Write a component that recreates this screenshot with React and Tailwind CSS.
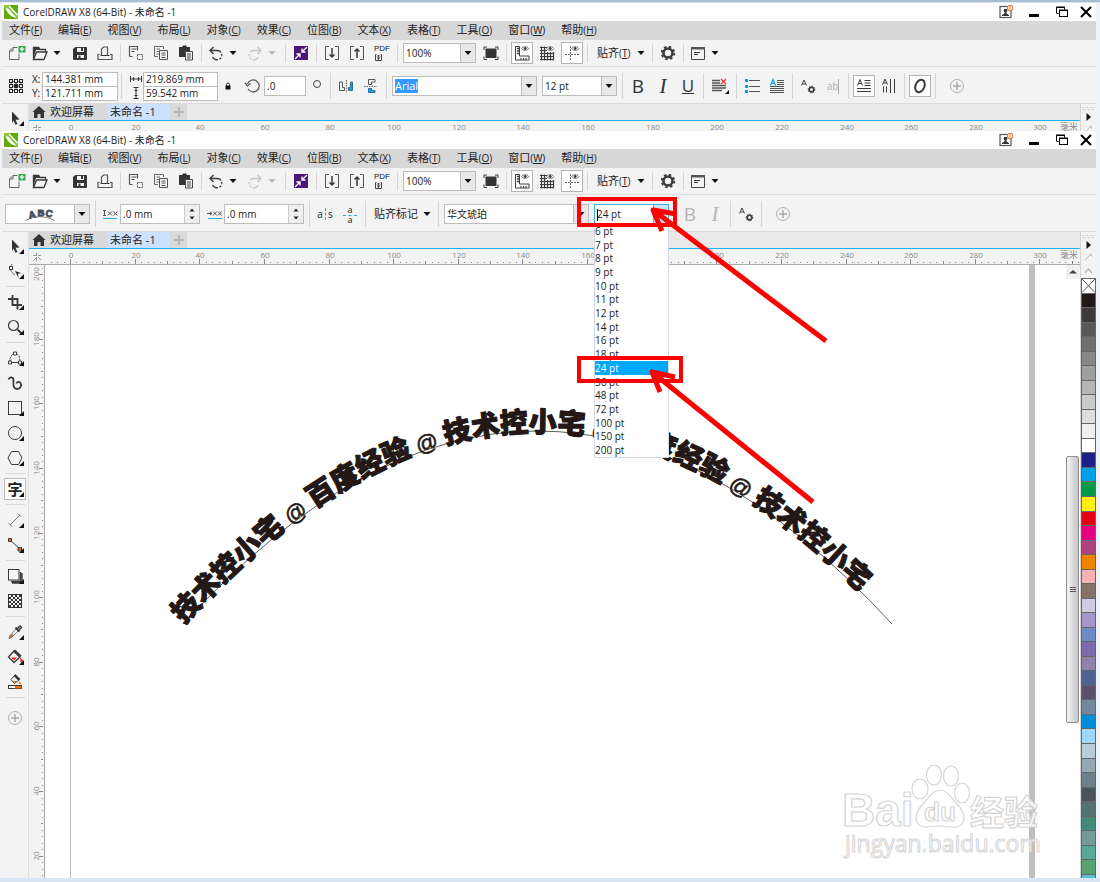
import { useState } from "react";

const MENUS = [
  ["文件", "F"],
  ["编辑", "E"],
  ["视图", "V"],
  ["布局", "L"],
  ["对象", "C"],
  ["效果", "C"],
  ["位图", "B"],
  ["文本", "X"],
  ["表格", "T"],
  ["工具", "O"],
  ["窗口", "W"],
  ["帮助", "H"],
];

const SIZES = [6, 7, 8, 9, 10, 11, 12, 14, 16, 18, 24, 36, 48, 72, 100, 150, 200];

const SWATCHES = [
  "#231815", "#3e3a39", "#595757", "#6f6f6f", "#888888", "#9fa0a0", "#b5b5b6",
  "#c9caca", "#dcdddd", "#efefef", "#ffffff", "#1d2088", "#00a0e9", "#009944",
  "#fff100", "#e60012", "#e4007f", "#b04183", "#f08300", "#f4b2b2", "#85736a",
  "#d0cbe5", "#a598c8", "#6e8bc6", "#7b6aac", "#8f82ac", "#4e6391", "#5a506e",
  "#7187a0", "#008cd6", "#a0d8f6", "#b8cdda", "#95a7b1", "#70808a", "#4a535c",
  "#527370", "#448a78", "#739a98", "#57a896", "#59a370",
];

const RULER_STEP = 64.63;

export default function App() {
  return (
    <div className="flex min-h-screen flex-col overflow-hidden bg-[#eef2fa] font-['Open_Sans','Noto_Sans_CJK_SC',sans-serif] text-[10px] text-[#222]">
      <div className="h-[3px] border-b border-[#dbe7f3] bg-[#a9bdd1]" />
      <div className="relative flex flex-1 flex-col pr-1 pl-0.5">
        <div className="h-32 overflow-hidden">
          <AppWindow propertyBar={<ObjectProperties />} />
        </div>
        <AppWindow propertyBar={<PathTextProperties />}>
          <Drawing />
        </AppWindow>
        <Annotations />
      </div>
      <div className="h-1 bg-[#d8e4f2]" />
    </div>
  );
}

function AppWindow({ propertyBar, children }) {
  return (
    <section className="flex flex-1 flex-col bg-[#f3f3f3]">
      <TitleBar />
      <MenuBar />
      <StandardToolbar />
      <div className="flex h-[37px] items-center gap-px border-b border-[#d9d9d9] pt-0.5 pl-0.5">
        {propertyBar}
      </div>
      <div className="flex flex-1">
        <Toolbox />
        <div className="flex min-w-0 flex-1 flex-col">
          <DocumentTabs />
          <HorizontalRuler />
          <div className="flex flex-1">
            <VerticalRuler />
            {children}
          </div>
        </div>
        <Palette />
      </div>
    </section>
  );
}

function TitleBar() {
  return (
    <header className="flex h-[18px] items-center bg-white pl-0.5">
      <svg viewBox="0 0 14 14" className="size-3.5">
        <rect width="14" height="14" fill="#65a80d" />
        <path d="M0 0h4l10 10v4h-1L0 3z" fill="#8cc63f" />
        <path d="M1.500 3.500C4 10 9 12.500 12.500 13L4 3.500z" fill="#fff" />
        <path d="M5 1l8.500 9" stroke="#fff" strokeWidth="1.300" />
      </svg>
      <h1 className="pl-[5px] text-[10px] whitespace-nowrap">CorelDRAW X8 (64-Bit) - 未命名 -1</h1>
      <div className="ml-auto flex items-center">
        <button aria-label="用户" className="flex w-7 justify-center">
          <svg viewBox="0 0 14 14" className="size-3.5" fill="none">
            <rect x="1" y="1.500" width="11" height="11" stroke="#555" strokeWidth="1.200" />
            <circle cx="6.500" cy="5.500" r="1.800" fill="#333" />
            <path d="M5.500 6h2v2.500L10 10v1H3v-1l2.500-1.500z" fill="#333" />
            <circle cx="11" cy="3" r="2.600" fill="#fff" stroke="#f08040" strokeWidth="1.200" />
            <path d="M11 1.500v3" stroke="#f08040" />
          </svg>
        </button>
        <button aria-label="最小化" className="flex w-7 justify-center">
          <svg viewBox="0 0 14 14" className="size-3.5">
            <path d="M2 9h10v3H2z" fill="#000" />
          </svg>
        </button>
        <button aria-label="还原" className="flex w-7 justify-center">
          <svg viewBox="0 0 14 14" className="size-3.5" fill="none" stroke="#000">
            <path d="M3.500 8.500h-2v-6h8v2M1 2h9" />
            <rect x="4.500" y="5.500" width="8" height="6" />
            <path d="M4 5h9" />
          </svg>
        </button>
        <button aria-label="关闭" className="flex w-5 justify-center">
          <svg viewBox="0 0 14 14" className="size-3.5" stroke="#000" strokeWidth="2">
            <path d="M2 2l10 10M12 2L2 12" />
          </svg>
        </button>
      </div>
    </header>
  );
}

function MenuBar() {
  return (
    <nav className="flex h-[19px] items-center gap-4 bg-[#d7d7d7] pl-[7px]">
      {MENUS.map(([label, key]) => (
        <button key={label} className="text-[11px] whitespace-nowrap">
          {label}
          <span className="text-[10px]">
            (<u>{key}</u>)
          </span>
        </button>
      ))}
    </nav>
  );
}

function Sep() {
  return (
    <div className="flex w-[5px] shrink-0 justify-center self-stretch py-1">
      <div className="w-px bg-[#d4d4d4]" />
    </div>
  );
}

function Caret({ muted }) {
  return (
    <svg viewBox="0 0 10 6" className="h-1.5 w-2.5" fill={muted ? "#bbb" : "#111"}>
      <path d="M1.500 1h7L5 5z" />
    </svg>
  );
}

function Tool({ label, boxed, wide, children }) {
  return (
    <button
      aria-label={label}
      className={`flex h-5 shrink-0 items-center justify-center ${wide ? "w-[26px]" : "w-6"}`}
    >
      <span
        className={`flex size-5 items-center justify-center ${
          boxed ? "bg-white outline outline-[#b5b5b5]" : ""
        }`}
      >
        {children}
      </span>
    </button>
  );
}

function SplitTool({ label, muted, children }) {
  return (
    <button aria-label={label} className="flex w-[38px] shrink-0 items-center gap-0.5 pl-px">
      {children}
      <Caret muted={muted} />
    </button>
  );
}

function Icon({ children }) {
  return (
    <svg viewBox="0 0 20 20" className="size-5 shrink-0" fill="none" stroke="#3a3a3a">
      {children}
    </svg>
  );
}

function StandardToolbar() {
  return (
    <div className="flex h-[27px] items-center gap-px border-b border-[#dedede] pl-0.5">
      <Tool label="新建">
        <Icon>
          <path d="M11.500 4.500H7L3.500 8v8.500h9.500v-6M7 4.500V8H3.500" stroke="#666" />
          <rect x="12.500" y="3" width="7" height="6.500" fill="#2fa84f" stroke="none" />
          <path d="M16 4v4.500M13.800 6.200h4.500" stroke="#fff" strokeWidth="1.300" />
        </Icon>
      </Tool>
      <SplitTool label="打开">
        <Icon>
          <path d="M3.500 16.500v-12h5l1.500 2h5.500v2M3.500 16.500L6.500 9h10.500l-3 7.500z" strokeWidth="1.300" />
          <path d="M3 4h6l1 3H6L3.500 15z" fill="#3a3a3a" stroke="none" />
        </Icon>
      </SplitTool>
      <Tool label="保存">
        <Icon>
          <path d="M5 4.500h11.500v12h-13V6z" fill="#333" />
          <path d="M7 5h7v4H7zM7 12h7v3H7z" fill="#f3f3f3" stroke="none" />
          <path d="M11 5h2v3h-2zM8.500 12.500h2V15h-2z" fill="#333" stroke="none" />
        </Icon>
      </Tool>
      <Tool label="打印">
        <Icon>
          <path d="M6.500 12V6l2-2h4v8M4.500 11.500h-1.500v5h14v-5h-2" strokeWidth="1.200" stroke="#555" />
          <path d="M5.500 12.500h9" />
        </Icon>
      </Tool>
      <Sep />
      <Tool label="剪切">
        <Icon>
          <path d="M3.500 13.500v-10h8v4M3.500 13.500h3M5.500 6h5M5.500 8.500h3" strokeWidth="1.200" stroke="#555" />
          <path d="M11.500 11.500h5v5h-5z" strokeDasharray="2 1" stroke="#555" />
        </Icon>
      </Tool>
      <Tool label="复制">
        <Icon>
          <path d="M7 13.500H3.500v-10h9V6M5.500 6H9M5.500 8.500H8M5.500 11H8" stroke="#666" />
          <path d="M8.500 7.500h8v9h-8zM10.500 10h4M10.500 12h4M10.500 14.500h4" stroke="#555" />
        </Icon>
      </Tool>
      <Tool label="粘贴">
        <Icon>
          <path d="M3 4h3l1-1.500h3L11 4h3v4H9v6H3z" fill="#333" stroke="none" />
          <path d="M9.500 8.500h7V17h-7zM11 11h4M11 13h4M11 15h4" stroke="#444" />
        </Icon>
      </Tool>
      <Sep />
      <SplitTool label="撤消">
        <Icon>
          <path d="M4.500 7.500H11a4.600 4.600 0 0 1 .5 9.200C9.500 17 7.500 16 6.500 14" strokeWidth="1.300" strokeDasharray="11 1.500 2.500 1.500 2 1.500" />
          <path d="M7.500 4L4 7.500 7.500 11" strokeWidth="1.400" />
        </Icon>
      </SplitTool>
      <SplitTool label="重做" muted>
        <Icon>
          <g stroke="#c4c4c4">
            <path d="M15.500 7.500H9a4.600 4.600 0 0 0-.5 9.200c2 .3 4-.7 5-2.700" strokeWidth="1.300" strokeDasharray="11 1.500 2.500 1.500 2 1.500" />
            <path d="M12.500 4L16 7.500 12.500 11" strokeWidth="1.300" />
          </g>
        </Icon>
      </SplitTool>
      <Sep />
      <Tool label="搜索内容">
        <Icon>
          <rect x="3" y="3" width="14" height="14" fill="#4b1678" stroke="none" />
          <path d="M16 4l-5 5M11 5.500V9h3.500M4 16l5-5M9 14.500V11H5.500" stroke="#fff" strokeWidth="1.300" />
        </Icon>
      </Tool>
      <Sep />
      <Tool label="导入">
        <Icon>
          <path d="M7 3.500H3.500v13H7M13 3.500h3.500v13H13" stroke="#555" />
          <path d="M10 5v9M7.500 11.500L10 14l2.500-2.500" strokeWidth="1.500" />
        </Icon>
      </Tool>
      <Tool label="导出">
        <Icon>
          <path d="M7 3.500H3.500v13H7M13 3.500h3.500v13H13" stroke="#555" />
          <path d="M10 15V6M7.500 8.500L10 6l2.500 2.500" strokeWidth="1.500" />
        </Icon>
      </Tool>
      <Tool label="发布为 PDF">
        <span className="flex flex-col items-start">
          <span className="font-['Liberation_Sans',sans-serif] text-[8px] leading-[8px]">PDF</span>
          <svg viewBox="0 0 8 8" className="size-2" fill="none" stroke="#444">
            <path d="M2.500 1.500h-1v6h6v-6h-1M4.500 7V2M3 3.500L4.500 2 6 3.500M3 5h3" />
          </svg>
        </span>
      </Tool>
      <Sep />
      <Combo label="缩放级别" value="100%" className="mx-0.5 w-[73px]" />
      <Tool label="全屏预览">
        <Icon>
          <rect x="5" y="6" width="10" height="8.500" fill="#333" />
          <path d="M3 7V4h3M14 4h3v3M17 13.500v3h-3M6 16.500H3v-3" />
        </Icon>
      </Tool>
      <Sep />
      <Tool label="显示标尺" boxed>
        <Icon>
          <path d="M3.500 3.500h4v9.500h9.500v4H3.500z" />
          <path d="M5 5.500h2M5 8h2M5 10.500h2M9 15v1.500M11.500 15v1.500M14 15v1.500" strokeWidth="1.300" />
          <Eye />
        </Icon>
      </Tool>
      <Tool label="显示网格">
        <Icon>
          <path d="M3 4.500h7M3 7.500h7M3 10.500h14M3 13.500h14M3 16.500h14M4.500 3.500v14M7.500 3.500v14M10.500 9v8.500M13.500 9v8.500M16.500 9v8.500" strokeWidth="1.200" />
          <Eye />
        </Icon>
      </Tool>
      <Tool label="显示辅助线" boxed>
        <Icon>
          <path d="M8.500 3v14.500M3 11.500h15" stroke="#666" strokeDasharray="2 1" />
          <Eye />
        </Icon>
      </Tool>
      <Sep />
      <button className="flex w-[58px] shrink-0 items-center gap-1.5 pl-1.5 whitespace-nowrap">
        <span>
          <span className="text-[11px]">贴齐</span>(<u>T</u>)
        </span>
        <Caret />
      </button>
      <Sep />
      <Tool label="选项">
        <Icon>
          <circle cx="10" cy="10" r="4.500" strokeWidth="2.500" />
          <circle cx="10" cy="10" r="6.300" strokeWidth="1.800" strokeDasharray="2.500 2.450" />
        </Icon>
      </Tool>
      <Sep />
      <SplitTool label="应用程序启动器">
        <Icon>
          <path d="M3.500 4.500h13v12h-13z" stroke="#444" />
          <path d="M3 4h14v2.500H3z" fill="#555" stroke="none" />
          <path d="M6 9.500h6M6 11.500h4" />
        </Icon>
      </SplitTool>
    </div>
  );
}

function Eye() {
  return (
    <g>
      <path d="M9.500 5.500c2-2.500 5.500-2.500 7.500 0-2 2.500-5.500 2.500-7.500 0z" fill="#f3f3f3" stroke="#777" />
      <circle cx="13.200" cy="5.500" r="1" fill="#333" />
    </g>
  );
}

function Combo({ label, value, className }) {
  return (
    <div className={`relative h-5 shrink-0 border border-[#bcbcbc] bg-white ${className}`}>
      <select
        aria-label={label}
        className="h-full w-full appearance-none bg-transparent pl-0.5 text-[10px] outline-none"
      >
        <option>{value}</option>
      </select>
      <span className="pointer-events-none absolute inset-y-0 right-0 flex w-[15px] items-center justify-center border-l border-[#bcbcbc] bg-[#e8e8e8]">
        <Caret />
      </span>
    </div>
  );
}

function Field({ label, value, className }) {
  return (
    <input
      aria-label={label}
      defaultValue={value}
      className={`border border-[#bcbcbc] bg-white pl-0.5 text-[10px] outline-none ${className}`}
    />
  );
}

function AddButton() {
  return (
    <button aria-label="快速自定义" className="ml-1 flex w-7 shrink-0 justify-center">
      <PlusCircle />
    </button>
  );
}

function PlusCircle() {
  return (
    <Icon>
      <circle cx="10" cy="10" r="6.500" stroke="#b0b0b0" />
      <path d="M10 6v8M6 10h8" stroke="#aaa" strokeWidth="1.500" />
    </Icon>
  );
}

function CharSettingsIcon() {
  return (
    <Icon>
      <path d="M3.500 9.500L6 4l2.500 5.500M4.300 8h3.500" stroke="#444" />
      <circle cx="13.500" cy="13.500" r="2.300" strokeWidth="1.600" />
      <circle cx="13.500" cy="13.500" r="3.300" strokeWidth="1" strokeDasharray="1.500 1" />
    </Icon>
  );
}

function StyleButtons({ muted }) {
  const color = muted ? "text-[#b5b5b5]" : "text-[#333]";
  return (
    <>
      <button aria-label="粗体" className={`w-6 shrink-0 text-[19px] leading-5 font-medium ${color}`}>
        B
      </button>
      <button
        aria-label="斜体"
        className={`w-6 shrink-0 font-['Liberation_Serif',serif] text-[21px] leading-5 italic ${color}`}
      >
        I
      </button>
    </>
  );
}

function ObjectProperties() {
  return (
    <>
      <Tool label="对象原点">
        <Icon>
          <path d="M5 5.500h10M5 10h10M5 14.500h10M5 5v10M10 5v10M15 5v10" stroke="#777" />
          <g fill="#f3f3f3" stroke="#222">
            <rect x="3.500" y="3.500" width="3" height="3" />
            <rect x="8.500" y="3.500" width="3" height="3" />
            <rect x="13.500" y="3.500" width="3" height="3" />
            <rect x="3.500" y="8.500" width="3" height="3" />
            <rect x="8.500" y="8.500" width="3" height="3" fill="#222" />
            <rect x="13.500" y="8.500" width="3" height="3" />
            <rect x="3.500" y="13.500" width="3" height="3" />
            <rect x="8.500" y="13.500" width="3" height="3" />
            <rect x="13.500" y="13.500" width="3" height="3" />
          </g>
        </Icon>
      </Tool>
      <div className="flex w-[89px] shrink-0 flex-col pl-[3px]">
        <label className="flex items-center">
          <span className="w-2.5">X:</span>
          <Field value="144.381 mm" className="h-[15px] w-[76px]" />
        </label>
        <label className="-mt-px flex items-center">
          <span className="w-2.5">Y:</span>
          <Field value="121.711 mm" className="h-[15px] w-[76px]" />
        </label>
      </div>
      <Sep />
      <div className="flex w-[93px] shrink-0 flex-col pl-[5px]">
        <div className="flex items-center gap-px">
          <svg viewBox="0 0 12 12" className="size-3" fill="none" stroke="#333">
            <path d="M.500 3v6M11.500 3v6M1 6h10M3.500 4v4M8.500 4v4" />
          </svg>
          <Field label="宽度" value="219.869 mm" className="h-[15px] w-[75px]" />
        </div>
        <div className="-mt-px flex items-center gap-px">
          <svg viewBox="0 0 12 12" className="size-3" fill="none" stroke="#333">
            <path d="M3.500 .500h5M3.500 11.500h5M6 1v10M4.500 3.500h3M4.500 8.500h3" />
          </svg>
          <Field label="高度" value="59.542 mm" className="h-[15px] w-[75px]" />
        </div>
      </div>
      <button aria-label="锁定比率" className="flex w-[18px] shrink-0 justify-center">
        <svg viewBox="0 0 8 8" className="size-2">
          <path d="M1.500 3.500h5v4h-5z" fill="#111" />
          <path d="M2.500 4V2.500a1.500 1.500 0 0 1 3 0V4" fill="none" stroke="#333" />
        </svg>
      </button>
      <div className="flex shrink-0 items-center gap-px pl-[5px]">
        <Icon>
          <path d="M4.500 8a6 6 0 1 1 .5 5M2 7l2.500 3L7.500 7.500" stroke="#555" strokeWidth="1.200" />
        </Icon>
        <Field label="旋转角度" value=".0" className="h-5 w-[42px]" />
      </div>
      <div className="flex w-5 shrink-0 justify-center pb-1">
        <svg viewBox="0 0 10 10" className="size-2.5" fill="none" stroke="#444">
          <circle cx="5" cy="5" r="3.500" />
        </svg>
      </div>
      <Sep />
      <Tool label="水平镜像">
        <Icon>
          <path d="M3.500 6v8.500h5v-3h-2V6z" stroke="#555" />
          <path d="M10.500 4v13" stroke="#666" strokeDasharray="1.500 1" />
          <path d="M16.500 6v8.500h-4v-3h2V6z" fill="#1ba1e2" stroke="#2b6f95" />
        </Icon>
      </Tool>
      <Tool label="垂直镜像">
        <Icon>
          <path d="M14 3.500H7.500v5h3v-2.500H14z" stroke="#555" />
          <path d="M3 10.500h13" stroke="#666" strokeDasharray="1.500 1" />
          <path d="M14 16.500H7.500v-4h3v2H14z" fill="#1ba1e2" stroke="#2b6f95" />
        </Icon>
      </Tool>
      <Sep />
      <div className="mx-0.5 flex h-5 w-[145px] shrink-0 border border-[#bcbcbc] bg-white">
        <div className="flex flex-1 items-center pl-0.5">
          <input
            aria-label="字体列表"
            defaultValue="Arial"
            className="field-sizing-content bg-[#3399ff] text-[11px] leading-[14px] text-white outline-none"
          />
        </div>
        <button
          aria-label="选择字体"
          className="flex w-[15px] items-center justify-center border-l border-[#bcbcbc] bg-[#e8e8e8]"
        >
          <Caret />
        </button>
      </div>
      <Combo label="字体大小" value="12 pt" className="mx-0.5 w-[75px]" />
      <Sep />
      <StyleButtons />
      <button aria-label="下划线" className="w-6 shrink-0 text-[17px] leading-5 text-[#333] underline">
        U
      </button>
      <Sep />
      <Tool label="文本对齐" wide>
        <Icon>
          <path d="M2 4.500h8M2 7h8M2 9.500h14M2 12h14M2 14.500h10" stroke="#555" strokeWidth="1.400" />
          <path d="M11 3l5 5M16 3l-5 5" stroke="#e33" strokeWidth="1.300" />
          <path d="M19 14v4h-4z" fill="#111" stroke="none" />
        </Icon>
      </Tool>
      <Sep />
      <Tool label="项目符号列表">
        <Icon>
          <path d="M7 4.500h11M7 10.500h11M7 15.500h11" stroke="#555" />
          <path d="M3 3h3v3H3zM3 9h3v3H3zM3 14h3v3H3z" fill="#00a2e8" stroke="none" />
        </Icon>
      </Tool>
      <Tool label="首字下沉">
        <Icon>
          <path d="M10 4.500h7M10 6.500h7M10 8.500h7M3 10.500h14M3 12.500h14M3 14.500h14M3 16.500h14" stroke="#555" />
          <path d="M3.500 9.500L6 3.500l2.500 6M4.500 7.500h3.500" stroke="#00a2e8" strokeWidth="1.200" />
        </Icon>
      </Tool>
      <Sep />
      <Tool label="文本属性">
        <CharSettingsIcon />
      </Tool>
      <Tool label="编辑文本">
        <span className="flex text-[10px] text-[#b0b0b0]">
          ab<span className="border-l border-[#b0b0b0]" />
        </span>
      </Tool>
      <Sep />
      <Tool label="水平方向" boxed>
        <Icon>
          <path d="M3.500 9.500L6 3.500l2.500 6M4.500 7.500h3.500M10.500 4.500h6M10.500 7h6M10.500 9.500h6M3 12.500h14M3 15.500h14" />
        </Icon>
      </Tool>
      <Tool label="垂直方向">
        <Icon>
          <path d="M3.500 8.500L6 3l2.500 5.500M4.500 7h3M4.500 10.500v6M7.500 10.500v6M11.500 3v14M15.500 3v14" />
        </Icon>
      </Tool>
      <Sep />
      <Tool label="OpenType" boxed>
        <Icon>
          <ellipse cx="10" cy="10" rx="4.500" ry="6.500" transform="rotate(22 10 10)" strokeWidth="2" />
        </Icon>
      </Tool>
      <Sep />
      <AddButton />
    </>
  );
}

function Spinner({ label, value }) {
  return (
    <div className="flex h-5 w-20 shrink-0 border border-[#bcbcbc] bg-white">
      <input
        aria-label={label}
        defaultValue={value}
        className="min-w-0 flex-1 pl-0.5 text-[10px] outline-none"
      />
      <div className="flex w-[15px] flex-col items-center justify-between border-l border-[#ccc] bg-[#efefef] py-[3px]">
        <button aria-label="增加" className="rotate-180">
          <Spin />
        </button>
        <button aria-label="减少">
          <Spin />
        </button>
      </div>
    </div>
  );
}

function Spin() {
  return (
    <svg viewBox="0 0 6 4" className="block h-1 w-1.5" fill="#222">
      <path d="M.5.5h5L3 3.500z" />
    </svg>
  );
}

function PathTextProperties() {
  return (
    <>
      <div className="mr-0.5 ml-px flex h-5 w-[85px] shrink-0 border border-[#bcbcbc] bg-white">
        <svg viewBox="0 0 69 18" className="flex-1">
          <path d="M20 15.500c9-5 20-5 29 0" fill="none" stroke="#777" />
          <g
            fill="#4a4a55"
            stroke="#4a4a55"
            strokeWidth=".8"
            fontFamily="Liberation Sans"
            fontSize="10"
            fontWeight="700"
          >
            <text x="23" y="13" transform="rotate(-12 27 10)">A</text>
            <text x="32" y="11">B</text>
            <text x="40" y="12" transform="rotate(12 44 10)">C</text>
          </g>
        </svg>
        <button
          aria-label="文本方向"
          className="flex w-[15px] items-center justify-center border-l border-[#bcbcbc] bg-[#e8e8e8]"
        >
          <Caret />
        </button>
      </div>
      <Sep />
      <svg viewBox="0 0 20 20" className="size-5 shrink-0" fill="none" stroke="#555">
        <path d="M5.500 6v6M4 6.500h3M4 11.500h3M9 7.500l4 4M13 7.500l-4 4M14.500 7.500l4 4M18.500 7.500l-4 4" />
        <path d="M4 14.500h14" stroke="#2aa9e0" />
      </svg>
      <Spinner label="与路径的距离" value=".0 mm" />
      <span className="w-px" />
      <svg viewBox="0 0 20 20" className="size-5 shrink-0" fill="none" stroke="#555">
        <path d="M4 9.500h5M7 8l2 1.500L7 11M10 7.500l4 4M14 7.500l-4 4M15 7.500l3.500 4M18.500 7.500l-3.500 4" />
        <path d="M5 14.500h14" stroke="#2aa9e0" />
      </svg>
      <Spinner label="偏移" value=".0 mm" />
      <span className="w-px" />
      <Sep />
      <Tool label="水平镜像文本">
        <span className="flex items-center gap-0.5 text-[10px] leading-3">
          a<span className="h-3 border-l border-dashed border-[#2aa9e0]" />s
        </span>
      </Tool>
      <Tool label="垂直镜像文本">
        <span className="flex flex-col items-center text-[9px] leading-[7px]">
          a<span className="mt-0.5 w-3.5 border-t border-dashed border-[#2aa9e0]" />a
        </span>
      </Tool>
      <Sep />
      <button className="flex w-[66px] shrink-0 items-center gap-1 pl-[5px] text-[11px] whitespace-nowrap">
        贴齐标记
        <Caret />
      </button>
      <Sep />
      <Combo label="字体列表" value="华文琥珀" className="mx-0.5 w-[145px]" />
      <SizeList />
      <Sep />
      <StyleButtons muted />
      <Sep />
      <Tool label="文本属性">
        <CharSettingsIcon />
      </Tool>
      <Sep />
      <AddButton />
    </>
  );
}

function SizeList() {
  const [size, setSize] = useState(24);
  return (
    <div className="relative z-10 mx-0.5 flex h-5 w-[75px] shrink-0 border border-[#35b5f0] bg-white">
      <input
        role="combobox"
        aria-label="字体大小"
        aria-expanded="true"
        aria-controls="size-list"
        value={`${size} pt`}
        readOnly
        className="min-w-0 flex-1 pl-0.5 text-[10px] outline-none"
      />
      <span className="absolute top-1 left-0.5 h-3 w-px bg-black" />
      <button
        aria-label="选择大小"
        className="flex w-[15px] items-center justify-center border-l border-[#35b5f0] bg-[#cce0ff]"
      >
        <Caret />
      </button>
      <ul
        id="size-list"
        role="listbox"
        className="absolute top-full -right-px -left-px mt-px flex h-[234px] flex-col border border-t-0 border-[#d5d9e6] bg-white"
      >
        {SIZES.map((s) => (
          <li
            key={s}
            role="option"
            aria-selected={s === size}
            onClick={() => setSize(s)}
            className={`flex flex-1 items-center text-[10px] leading-3 ${
              s === size ? "bg-[#00a8ff] text-white" : ""
            }`}
          >
            {s} pt
          </li>
        ))}
      </ul>
    </div>
  );
}

function DocumentTabs() {
  return (
    <div className="flex h-[17px] shrink-0 items-center border-b border-[#1eb0f5] bg-[#e9e9e9] text-[11px] leading-4">
      <button className="flex h-4 w-[78px] items-center gap-1 bg-[#d9d9d9] pl-[3px]">
        <svg viewBox="0 0 14 14" className="size-3.5" fill="#333">
          <path d="M7 1l6.500 6H12v6H8.500V9h-3v4H2V7H.5z" />
        </svg>
        欢迎屏幕
      </button>
      <button className="h-4 w-[63px] bg-[#cce0ff] text-left">
        <span className="pl-[3px]">未命名 -1</span>
      </button>
      <button aria-label="新建文档" className="flex h-4 w-[17px] items-center justify-center bg-[#d9d9d9]">
        <svg viewBox="0 0 10 10" className="size-2.5" stroke="#aaa" strokeWidth="1.500">
          <path d="M5 0v10M0 5h10" />
        </svg>
      </button>
    </div>
  );
}

function HorizontalRuler() {
  const ticks = Array.from({ length: 162 }, (_, i) => i - 5);
  return (
    <div className="h-4 shrink-0 overflow-hidden border-b border-[#aaa]">
      <svg className="h-4 w-full" fill="#888" stroke="none">
        <path d="M4 6.500h3M9 6.500h3M7.500 4v3M7.500 8v4M9 8l3 3M4 12l3-3" stroke="#999" fill="none" />
        {ticks.map((i) => {
          const x = Math.round(41 + (i * RULER_STEP) / 10);
          if (x < 18) return null;
          return (
            <rect
              key={i}
              x={x}
              y={i % 10 === 0 ? 10 : i % 5 === 0 ? 12 : 13}
              width="1"
              height={i % 10 === 0 ? 5 : i % 5 === 0 ? 3 : 1}
            />
          );
        })}
        {Array.from({ length: 16 }, (_, i) => (
          <text
            key={i}
            x={Math.round(42 + i * RULER_STEP)}
            y="9"
            fontSize="8"
            textAnchor="middle"
          >
            {i * 20}
          </text>
        ))}
        <text x="1031" y="9" fontSize="9">
          毫米
        </text>
      </svg>
    </div>
  );
}

function VerticalRuler() {
  const ticks = Array.from({ length: 100 }, (_, i) => i - 1);
  return (
    <div className="relative w-4 shrink-0 overflow-hidden border-r border-[#aaa]">
      <svg className="absolute inset-0 h-full w-4" fill="#888">
        {ticks.map((i) => (
          <rect
            key={i}
            x={i % 10 === 0 ? 10 : i % 5 === 0 ? 12 : 13}
            y={Math.round(9 + (i * RULER_STEP) / 10)}
            width={i % 10 === 0 ? 4 : i % 5 === 0 ? 2 : 1}
            height="1"
          />
        ))}
        {Array.from({ length: 10 }, (_, i) => {
          const y = Math.round(9 + i * RULER_STEP);
          return (
            <text key={i} x="10" y={y} fontSize="8" textAnchor="middle" transform={`rotate(-90 10 ${y})`}>
              {200 - i * 20}
            </text>
          );
        })}
      </svg>
    </div>
  );
}

const CORNER = <path d="M19 13v5h-5z" fill="#111" stroke="none" />;

const TOOL_GROUPS = [
  [
    ["选择", <><path d="M7 3.500l7.500 8-4 .3 2 4.200-2 .8-2-4.300L7 15z" fill="#333" stroke="none" />{CORNER}</>],
    ["形状", <><path d="M7 3c-3 5-1.500 8 3 11" stroke="#666" /><rect x="4.500" y="5.500" width="3" height="3" fill="#fff" /><path d="M10 10l6 2-3 1 .5 4z" fill="#333" stroke="none" />{CORNER}</>],
  ],
  [
    ["裁剪", <><path d="M7.500 3v10H17M3 7h9.500v10.500" strokeWidth="1.800" />{CORNER}</>],
    ["缩放", <><circle cx="8.500" cy="8.500" r="5" strokeWidth="1.200" /><path d="M12.500 12.500l4.500 4.500" strokeWidth="2" />{CORNER}</>],
  ],
  [
    ["手绘", <><path d="M5 13.500c0-5 2-8 5-8s5 3 5 8" strokeDasharray="2 1" /><path d="M5 14.500h10" /><path d="M3.500 13h3v3h-3zM13.500 13h3v3h-3zM8.500 4h3v3h-3z" fill="#fff" />{CORNER}</>],
    ["艺术笔", <path d="M3.500 6.500C5 3 8.500 4 8.500 7.500c0 3-1 8.500 3.500 8.500 3.500 0 5-3.500 3.500-6-1-1.600-3.500-1.500-4 .5" strokeWidth="1.800" />],
    ["矩形", <><rect x="3.500" y="3.500" width="13" height="13" />{CORNER}</>],
    ["椭圆形", <><circle cx="10" cy="10" r="6.500" />{CORNER}</>],
    ["多边形", <><path d="M6.500 3.500h7L17 10l-3.500 6.500h-7L3 10z" />{CORNER}</>],
  ],
  [["文本", null]],
  [
    ["平行度量", <><path d="M5 15L15 5M3.500 13l3.500 3.500M13 3.500L16.500 7" stroke="#777" />{CORNER}</>],
    ["直线连接器", <><path d="M5 5l10 9" /><path d="M3.500 3.500h3v3h-3zM13 12.500h3.500v3.500H13z" fill="#e86c10" />{CORNER}</>],
  ],
  [
    ["阴影", <><path d="M15.500 6v9.500H6M17 7v10H7" strokeWidth="1.400" /><rect x="3.500" y="3.500" width="10.500" height="10.500" fill="#f7f7f7" />{CORNER}</>],
    ["透明度", <><rect x="3" y="3" width="14" height="14" fill="#333" stroke="none" /><path d="M4 5h12M4 9h12M4 13h12" stroke="#f3f3f3" strokeWidth="2" strokeDasharray="2 2" /><path d="M6 7h10M6 11h10M6 15h10" stroke="#f3f3f3" strokeWidth="2" strokeDasharray="2 2" /></>],
  ],
  [
    ["颜色滴管", <><path d="M4 16.500l1-3L11 7l2 2-6.500 6.500z" stroke="#777" /><path d="M4 16.500l1-3 2.500-1.500 1 1-2 2.500z" fill="#c8601c" stroke="none" /><path d="M10.500 5.500l4 4" strokeWidth="1.800" /><path d="M12 7l3-3 1.500 1.500-3 3z" strokeWidth="1.500" />{CORNER}</>],
    ["交互式填充", <><path d="M9 4l6 6-6 5.500L3.500 10z" strokeWidth="1.300" /><path d="M9 3.500l6.500 6" strokeWidth="3" /><path d="M6 10.500h6l-3 3z" fill="#e22" stroke="none" /><path d="M15 11c3 1 3 3 2.500 5l-2-1z" fill="#e22" stroke="none" />{CORNER}</>],
    ["智能填充", <><path d="M9.500 3.500l4.500 4.500-4.500 3.500L6 7.500z" /><path d="M9.500 3l5 5" strokeWidth="2.500" /><path d="M8 9h4l-2.500 2zM15 9l1 3h-2z" fill="#e86c10" stroke="none" /><rect x="3.500" y="13.500" width="13" height="3" fill="#fff" /><path d="M10 14h6.500v2.500H10z" fill="#e86c10" stroke="none" /></>],
  ],
];

function Toolbox() {
  return (
    <aside className="flex w-[27px] shrink-0 flex-col items-center border-r border-[#e0e0e0] pt-px">
      {TOOL_GROUPS.map((group, i) => (
        <div key={i} className="flex flex-col items-center">
          {group.map(([label, art]) => (
            <button key={label} aria-label={label} className="flex h-[25px] items-center">
              {art ? (
                <Icon>{art}</Icon>
              ) : (
                <span className="relative flex size-5 items-center justify-center bg-white text-[15px] leading-5 font-bold outline outline-[#bbb]">
                  字
                  <svg viewBox="0 0 20 20" className="absolute inset-0 size-5">{CORNER}</svg>
                </span>
              )}
            </button>
          ))}
          <div className="mt-[3px] mb-0.5 h-px w-[19px] shrink-0 bg-[#d6d6d6]" />
        </div>
      ))}
      <button aria-label="快速自定义" className="mt-2">
        <PlusCircle />
      </button>
    </aside>
  );
}

function Palette() {
  return (
    <aside className="flex w-4 shrink-0 flex-col border-l border-[#d5d5d5]">
      <svg viewBox="0 0 15 46" className="h-[46px] w-[15px] shrink-0" fill="none">
        <path d="M1 3.500h13M2 5.500h12" stroke="#bbb" strokeDasharray="1 1.500" />
        <path d="M5.500 9v8l4.500-4z" fill="#111" />
        <path d="M4 28l5-5M8.500 22l2.500 2.500M9.500 21.500l2 2" stroke="#bbb" />
        <path d="M4 41l3.500-4 3.500 4" stroke="#bbb" strokeWidth="1.500" />
      </svg>
      <div className="flex flex-1 flex-col divide-y divide-[#666] border border-b-0 border-[#666]">
        <button aria-label="无填充" className="min-h-0 flex-1 bg-white">
          <svg viewBox="0 0 14 14" preserveAspectRatio="none" className="h-full w-full" stroke="#444">
            <path d="M0 0l14 14M14 0L0 14" />
          </svg>
        </button>
        {SWATCHES.map((c) => (
          <button key={c} aria-label={c} className="min-h-0 flex-1" style={{ backgroundColor: c }} />
        ))}
        <button aria-label="#57c0d2" className="h-[3px] bg-[#57c0d2]" />
      </div>
    </aside>
  );
}

function Drawing() {
  return (
    <main className="relative flex flex-1 justify-end bg-white">
      <div className="absolute inset-y-0 left-[25px] w-px bg-[#bdbdbd]" />
      <div className="absolute inset-y-0 right-[45px] w-1.5 bg-[#bfbfbf]" />
      <svg viewBox="0 0 900 480" className="absolute top-0 left-0 h-[480px] w-[900px]">
        <path id="arc" d="M138 359Q492 -27 847 359" fill="none" stroke="#333" strokeWidth=".8" />
        <text
          fill="#231815"
          stroke="#231815"
          strokeWidth="1.200"
          strokeLinejoin="round"
          fontSize="28"
          fontWeight="900"
          fontFamily="Noto Sans CJK SC"
          dy="1"
        >
          <textPath href="#arc">
            技术控小宅 <At /> 百度经验 <At /> 技术控小宅 <At /> 百度经验 <At /> 技术控小宅
          </textPath>
        </text>
      </svg>
      <Watermark />
      <div className="flex w-3.5 flex-col bg-white">
        <button aria-label="向上滚动" className="flex h-3.5 items-center justify-center bg-[#f0f0f0]">
          <svg viewBox="0 0 8 6" className="h-1.5 w-2" fill="#444">
            <path d="M0 4.500L4 1l4 3.500z" />
          </svg>
        </button>
        <div className="flex-[178]" />
        <div className="flex w-[13px] flex-[265] flex-col items-center justify-center gap-px rounded-xs border border-[#8f8f8f] bg-linear-to-r from-[#f5f5f5] to-[#c4c4c8]">
          <span className="h-px w-1.5 bg-[#555]" />
          <span className="h-px w-1.5 bg-[#555]" />
          <span className="h-px w-1.5 bg-[#555]" />
        </div>
        <div className="flex-[156]" />
      </div>
    </main>
  );
}

function At() {
  return (
    <tspan fontSize="22" fontWeight="400" strokeWidth=".6" fontFamily="Liberation Sans">
      @
    </tspan>
  );
}

function Watermark() {
  return (
    <svg
      viewBox="0 0 210 105"
      className="absolute right-[39px] bottom-[13px] h-[105px] w-[210px]"
      fill="#fff"
      fillOpacity=".85"
      stroke="#d5d5d5"
      strokeWidth="1.200"
    >
      <g>
        <ellipse cx="89" cy="29" rx="8" ry="10" />
        <ellipse cx="103" cy="15" rx="7.500" ry="10" />
        <ellipse cx="120" cy="16" rx="7.500" ry="10" />
        <ellipse cx="131" cy="33" rx="7.500" ry="10" />
        <path d="M109 30c8 0 11 8 16 13s9 10 8 16-6 9-13 8-8-1-11-1-6 0-12 1-12-3-12-9 4-11 8-15 8-13 16-13z" />
      </g>
      <text x="11" y="66" fontSize="46" fontWeight="700" fontFamily="Liberation Sans">
        Bai
      </text>
      <text x="93" y="61" fontSize="26" fontWeight="700" fontFamily="Liberation Sans">
        du
      </text>
      <text x="139" y="65" fontSize="34" fontWeight="700" fontFamily="Noto Sans CJK SC">
        经验
      </text>
      <text x="14" y="92" fontSize="23" fontFamily="Open Sans" strokeWidth="1">
        jingyan.baidu.com
      </text>
    </svg>
  );
}

function Annotations() {
  return (
    <svg
      className="pointer-events-none absolute top-0 left-0 z-20 h-[600px] w-[900px]"
      viewBox="0 3 900 600"
      fill="none"
      stroke="#f00"
      strokeWidth="4"
    >
      <rect x="579" y="199" width="96" height="26" />
      <rect x="579" y="358" width="102" height="23" />
      <path d="M826 341L653 210M676 214L653 210L662 231" strokeWidth="5" strokeLinejoin="round" />
      <path d="M813 502L652 372M675 377L652 372L660 392" strokeWidth="5" strokeLinejoin="round" />
    </svg>
  );
}
